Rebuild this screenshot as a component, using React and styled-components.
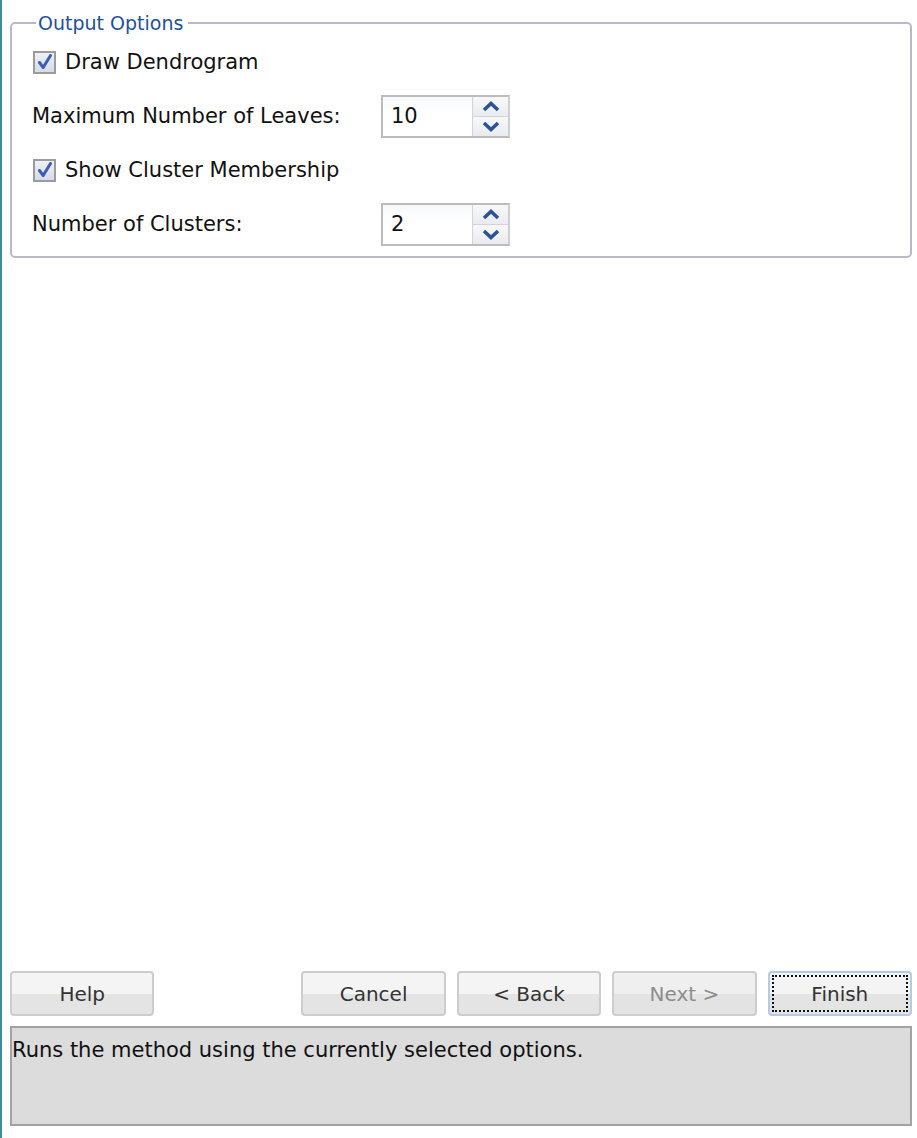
import styled, { createGlobalStyle } from 'styled-components';

const GlobalStyle = createGlobalStyle`
  html, body {
    margin: 0;
    padding: 0;
    background: #ffffff;
  }
  body {
    font-family: "DejaVu Sans", Verdana, sans-serif;
    color: #111;
  }
`

const Page = styled.div`
  box-sizing: border-box;
  height: 1138px;
  border-left: 2px solid #3b8e9f;
  padding: 11px 5px 12px 8px;
  display: flex;
  flex-direction: column;
`

const Group = styled.fieldset`
  margin: 0;
  padding: 0 20px 5px 20px;
  border: 2px solid #b9b9c8;
  border-radius: 5px;
  min-width: 0;
`

const Legend = styled.legend`
  margin-left: 4px;
  padding: 0 5px 0 2px;
  font-size: 19px;
  line-height: 24px;
  color: #1e4f9c;
`

const Row = styled.div`
  height: 54px;
  display: flex;
  align-items: center;
  font-size: 21px;
`

const Label = styled.span`
  width: 349px;
  flex: none;
`

const CheckLabel = styled.label`
  display: flex;
  align-items: center;
  gap: 9px;
  padding-left: 1px;
`

const Box = styled.span`
  width: 23px;
  height: 23px;
  box-sizing: border-box;
  border: 2px solid #9b9b9b;
  background: linear-gradient(#eef0f6, #d7dbe6);
  display: flex;
  align-items: center;
  justify-content: center;
`

const Spin = styled.div`
  display: flex;
  width: 129px;
  height: 43px;
  box-sizing: border-box;
  border: 2px solid #bcbcbc;
  border-right-color: #cfcfcf;
`

const SpinValue = styled.div`
  flex: 1;
  display: flex;
  align-items: center;
  padding-left: 8px;
  font-size: 21px;
  background: linear-gradient(#f6f8fa, #ffffff 40%);
`

const SpinButtons = styled.div`
  width: 35px;
  display: flex;
  flex-direction: column;
  border-left: 1px solid #d4d4d4;
`

const SpinButton = styled.div`
  flex: 1;
  display: flex;
  align-items: center;
  justify-content: center;
  background: linear-gradient(#f7f8fa, #e9ecf0);
  & + & {
    border-top: 1px solid #d4d4d4;
  }
`

const Spacer = styled.div`
  flex: 1;
`

const Buttons = styled.div`
  display: flex;
  gap: 11px;
  margin-bottom: 10px;
`

const Button = styled.button`
  width: 145px;
  height: 45px;
  box-sizing: border-box;
  padding: 0;
  font-family: "DejaVu Sans", Verdana, sans-serif;
  font-size: 20px;
  color: ${({ disabled }) => (disabled ? '#8c8c8c' : '#333')};
  border: 2px solid ${({ $focused }) => ($focused ? '#b4cbe8' : '#cdcdcd')};
  border-radius: 4px;
  background: ${({ disabled }) =>
    disabled
      ? 'linear-gradient(#efefef 0%, #efefef 50%, #e3e3e3 50%, #e3e3e3 100%)'
      : 'linear-gradient(#f4f4f4 0%, #f4f4f4 50%, #e4e4e4 50%, #e4e4e4 100%)'};
  display: flex;
  align-items: center;
  justify-content: center;
  margin-right: ${({ $gapAfter }) => $gapAfter || 0}px;
`

const FocusRing = styled.span`
  box-sizing: border-box;
  width: calc(100% - 4px);
  height: calc(100% - 4px);
  border: 2px dotted #111;
  display: flex;
  align-items: center;
  justify-content: center;
`

const Status = styled.div`
  flex: none;
  height: 100px;
  box-sizing: border-box;
  border: 2px solid #a3a3a3;
  background: #dcdcdc;
  padding: 9px 0 0 0;
  font-size: 21px;
  line-height: 26px;
`

const Check = () => (
  <Box>
    <svg width="16" height="16" viewBox="0 0 16 16">
      <path d="M2.5 8.5 L6.2 13.5 L13.5 1.5" fill="none" stroke="#3f5cb0" strokeWidth="3" strokeLinecap="round" strokeLinejoin="round" />
    </svg>
  </Box>
)

const Chevron = ({ up }) => (
  <svg width="18" height="11" viewBox="0 0 18 11">
    <path d={up ? 'M2 9 L9 2.5 L16 9' : 'M2 2 L9 8.5 L16 2'} fill="none" stroke="#2d5394" strokeWidth="3.6" />
  </svg>
)

const Spinner = ({ value }) => (
  <Spin>
    <SpinValue>{value}</SpinValue>
    <SpinButtons>
      <SpinButton><Chevron up /></SpinButton>
      <SpinButton><Chevron /></SpinButton>
    </SpinButtons>
  </Spin>
)

export default function App() {
  return (
    <>
      <GlobalStyle />
      <Page>
        <Group>
          <Legend>Output Options</Legend>
          <Row>
            <CheckLabel><Check />Draw Dendrogram</CheckLabel>
          </Row>
          <Row>
            <Label>Maximum Number of Leaves:</Label>
            <Spinner value="10" />
          </Row>
          <Row>
            <CheckLabel><Check />Show Cluster Membership</CheckLabel>
          </Row>
          <Row>
            <Label>Number of Clusters:</Label>
            <Spinner value="2" />
          </Row>
        </Group>
        <Spacer />
        <Buttons>
          <Button $gapAfter={136}>Help</Button>
          <Button>Cancel</Button>
          <Button>&lt; Back</Button>
          <Button disabled>Next &gt;</Button>
          <Button $focused><FocusRing>Finish</FocusRing></Button>
        </Buttons>
        <Status>Runs the method using the currently selected options.</Status>
      </Page>
    </>
  )
}
